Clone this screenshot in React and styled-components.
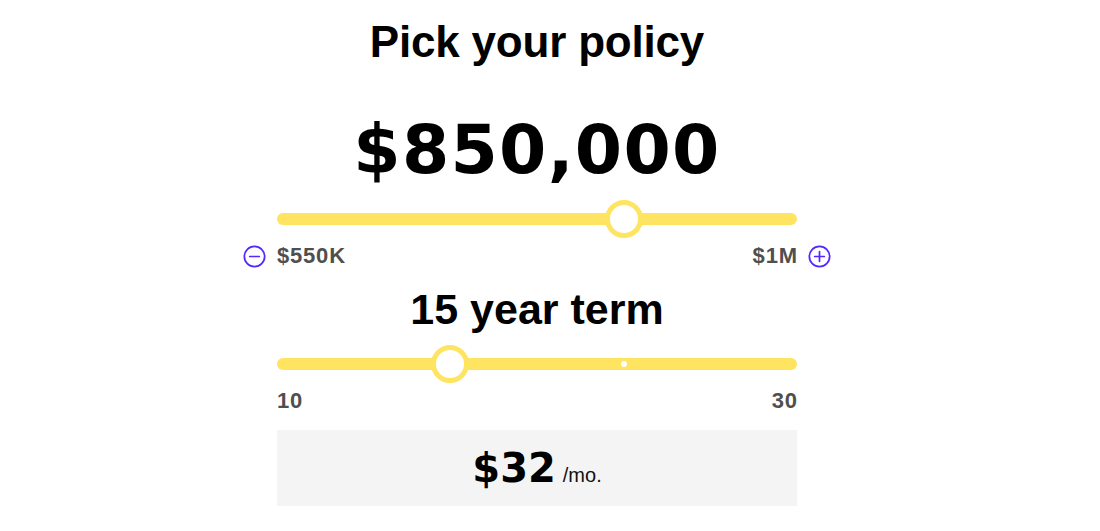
import React from 'react'
import styled, { createGlobalStyle } from 'styled-components'

const GlobalStyle = createGlobalStyle`
  html, body {
    margin: 0;
    padding: 0;
    background: #ffffff;
  }
  body {
    font-family: "Liberation Sans", Arial, sans-serif;
    color: #000;
  }
`

const YELLOW = '#ffe462'

const Page = styled.div`
  display: flex;
  justify-content: center;
  padding: 20px 26px 0 0;
`

const Picker = styled.section`
  width: 520px;
  display: flex;
  flex-direction: column;
  align-items: stretch;
`

const Title = styled.h1`
  margin: 0;
  font-size: 44px;
  line-height: 44px;
  font-weight: 700;
  text-align: center;
  letter-spacing: -0.2px;
`

const Amount = styled.div`
  margin-top: 52px;
  font-family: "DejaVu Sans", sans-serif;
  font-weight: 700;
  font-size: 68px;
  line-height: 68px;
  text-align: center;
  letter-spacing: 1.3px;
`

const Term = styled.h2`
  margin: 20px 0 0;
  font-size: 43px;
  line-height: 43px;
  font-weight: 700;
  text-align: center;
`

const Track = styled.div`
  position: relative;
  margin-top: ${(p) => p.$top}px;
  height: 38px;
  display: flex;
  align-items: center;

  &::before {
    content: '';
    flex: 1;
    height: 12px;
    border-radius: 6px;
    background: ${YELLOW};
  }
`

const Thumb = styled.span`
  position: absolute;
  top: 0;
  width: 38px;
  height: 38px;
  box-sizing: border-box;
  margin-left: -19px;
  border-radius: 50%;
  border: 5px solid ${YELLOW};
  background: #fff;
`

const Tick = styled.span`
  position: absolute;
  top: 16px;
  width: 6px;
  height: 6px;
  margin-left: -3px;
  border-radius: 50%;
  background: #fff;
`

const Range = styled.div`
  margin: 6px ${(p) => (p.$icons ? '-34px' : '0')} 0;
  display: flex;
  align-items: center;
  gap: 11px;
  height: 24px;
`

const Bound = styled.span`
  font-size: 22px;
  line-height: 22px;
  font-weight: 700;
  letter-spacing: 0.8px;
  color: #4f4f4f;
  flex: ${(p) => (p.$grow ? 1 : 'none')};
  text-align: ${(p) => (p.$end ? 'right' : 'left')};
  margin-right: ${(p) => (p.$end ? '-0.8px' : '0')};
`

const IconButton = styled.button`
  width: 23px;
  height: 23px;
  padding: 0;
  border: none;
  background: none;
  color: #5527ff;
  display: flex;
  cursor: pointer;

  svg {
    width: 23px;
    height: 23px;
  }
`

const Quote = styled.div`
  margin-top: 17px;
  height: 76px;
  background: #f4f4f4;
  display: flex;
  align-items: center;
  justify-content: center;
`

const Price = styled.span`
  display: flex;
  align-items: baseline;
  gap: 7px;
`

const Dollars = styled.span`
  font-family: "DejaVu Sans", sans-serif;
  font-weight: 700;
  font-size: 40px;
  line-height: 40px;
`

const Per = styled.span`
  font-size: 20px;
  color: #111;
`

const CircleIcon = ({ plus }) => (
  <svg viewBox="0 0 24 24" fill="none" stroke="currentColor" strokeWidth="1.8" strokeLinecap="round">
    <circle cx="12" cy="12" r="10.6" />
    <line x1="7" y1="12" x2="17" y2="12" />
    {plus && <line x1="12" y1="7" x2="12" y2="17" />}
  </svg>
)

const Slider = ({ top, value, ticks = [] }) => (
  <Track $top={top}>
    {ticks.map((t) => (
      <Tick key={t} style={{ left: `${t * 100}%` }} />
    ))}
    <Thumb style={{ left: `${value * 100}%` }} />
  </Track>
)

export default function App() {
  const coverage = 850000
  const fraction = (coverage - 550000) / 450000

  return (
    <>
      <GlobalStyle />
      <Page>
        <Picker>
          <Title>Pick your policy</Title>
          <Amount>${coverage.toLocaleString('en-US')}</Amount>
          <Slider top={16} value={fraction} />
          <Range $icons>
            <IconButton aria-label="Decrease coverage">
              <CircleIcon />
            </IconButton>
            <Bound $grow>$550K</Bound>
            <Bound $end>$1M</Bound>
            <IconButton aria-label="Increase coverage">
              <CircleIcon plus />
            </IconButton>
          </Range>
          <Term>15 year term</Term>
          <Slider top={14} value={1 / 3} ticks={[2 / 3]} />
          <Range>
            <Bound $grow>10</Bound>
            <Bound $end>30</Bound>
          </Range>
          <Quote>
            <Price>
              <Dollars>$32</Dollars>
              <Per>/mo.</Per>
            </Price>
          </Quote>
        </Picker>
      </Page>
    </>
  )
}
